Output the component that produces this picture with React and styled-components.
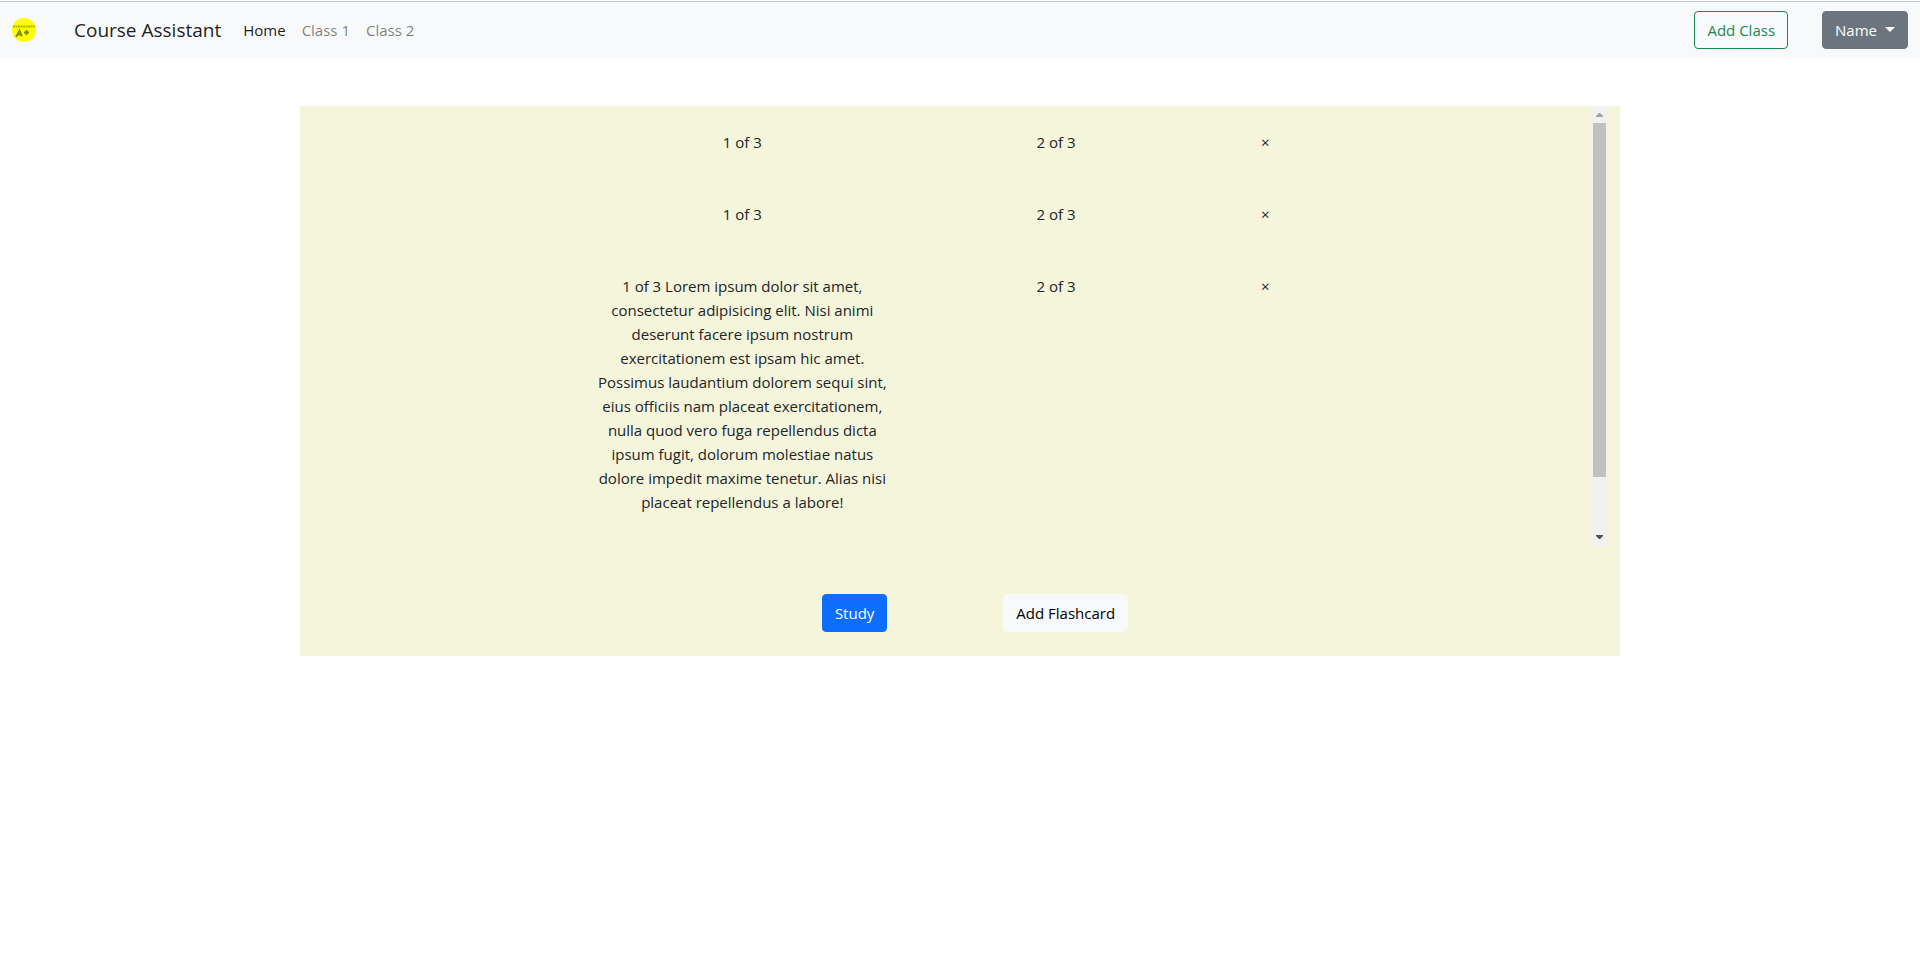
import React from "react";
import styled, { createGlobalStyle } from "styled-components";

const GlobalStyle = createGlobalStyle`
  *, *::before, *::after { box-sizing: border-box; }
  body {
    margin: 0;
    background: #fff;
    color: #212529;
    font-family: "Segoe UI", "Open Sans", "Noto Sans", sans-serif;
    font-size: 15px;
    line-height: 24px;
  }
`;

const TopEdge = styled.div`
  height: 2px;
  background: #fff;
  border-bottom: 1px solid #c8cccc;
`;

const Navbar = styled.nav`
  display: flex;
  align-items: center;
  justify-content: space-between;
  min-height: 56px;
  padding: 8px 12px;
  background: #f8f9fa;
`;

const NavGroup = styled.div`
  display: flex;
  align-items: center;
  gap: ${(p) => p.$gap}px;
`;

const Brand = styled.a`
  margin-right: 6px;
  color: rgba(0, 0, 0, 0.9);
  font-size: 19px;
  line-height: 30px;
  text-decoration: none;
`;

const NavLink = styled.a`
  color: ${(p) => (p.$active ? "rgba(0, 0, 0, 0.9)" : "rgba(0, 0, 0, 0.5)")};
  text-decoration: none;
`;

const variants = {
  primary: ["#0d6efd", "#0d6efd", "#fff"],
  secondary: ["#6c757d", "#6c757d", "#fff"],
  light: ["#f8f9fa", "#f8f9fa", "#000"],
  outline: ["transparent", "#198754", "#198754"],
};

const Button = styled.button`
  display: inline-flex;
  align-items: center;
  gap: 8px;
  padding: 6px 12px;
  border: 1px solid ${(p) => variants[p.$variant][1]};
  border-radius: 4px;
  background: ${(p) => variants[p.$variant][0]};
  color: ${(p) => variants[p.$variant][2]};
  font: inherit;
  cursor: pointer;
`;

const Caret = styled.span`
  margin-bottom: 2px;
  border: 5px solid transparent;
  border-top-color: currentColor;
  border-bottom: 0;
`;

const Panel = styled.main`
  width: 100%;
  max-width: 1320px;
  margin: 48px auto 0;
  padding: 0 12px;
  background: #f5f5dc;
`;

const ScrollArea = styled.div`
  display: flex;
  height: 440px;
`;

const CardList = styled.ul`
  flex: 1;
  min-width: 0;
  margin: 0;
  padding: 0 12px 72px;
  overflow-y: auto;
  list-style: none;
  scrollbar-width: none;
`;

const Scrollbar = styled.div`
  display: flex;
  flex-direction: column;
  width: 17px;
  background: #f1f1f1;
`;

const ScrollTrack = styled.div`
  flex: 1;
  padding: 0 2px;
`;

const ScrollThumb = styled.div`
  background: #c1c1c1;
`;

const ScrollArrow = styled.svg`
  display: block;
  width: 17px;
  height: 17px;
  fill: ${(p) => (p.$dim ? "#a3a3a3" : "#505050")};
`;

const CardRow = styled.li`
  display: grid;
  grid-template-columns: 5fr 6fr 6fr 2fr 5fr;
  padding: 24px 0;
  text-align: center;
`;

const Cell = styled.div`
  min-width: 0;
  padding: 0 12px;
  &:first-child { grid-column-start: 2; }
`;

const RemoveButton = styled.button`
  padding: 0 8px;
  border: 0;
  background: none;
  color: inherit;
  font: inherit;
  cursor: pointer;
`;

const Actions = styled.div`
  display: flex;
  justify-content: center;
  gap: 116px;
  padding: 48px 0 24px 30px;
`;

function Logo() {
  return (
    <svg width="24" height="24" viewBox="0 0 24 24" role="img" aria-label="A+ logo">
      <circle cx="12" cy="12" r="12" fill="#ffff00" />
      <path d="M1 8.500H23" stroke="#9a9a10" strokeWidth="1.800" strokeDasharray="2 .5" opacity=".75" />
      <path d="M4 19L7.500 12.500L10 18.500M5.500 16.500H9.500M12 14.500H17M14.500 12V17" fill="none" stroke="#7f8c00" strokeWidth="1.800" />
    </svg>
  );
}

const cards = [
  { term: "1 of 3", definition: "2 of 3" },
  { term: "1 of 3", definition: "2 of 3" },
  {
    term: "1 of 3 Lorem ipsum dolor sit amet, consectetur adipisicing elit. Nisi animi deserunt facere ipsum nostrum exercitationem est ipsam hic amet. Possimus laudantium dolorem sequi sint, eius officiis nam placeat exercitationem, nulla quod vero fuga repellendus dicta ipsum fugit, dolorum molestiae natus dolore impedit maxime tenetur. Alias nisi placeat repellendus a labore!",
    definition: "2 of 3",
  },
];

function ScrollingCards() {
  const listRef = React.useRef(null);
  const [scroll, setScroll] = React.useState({ size: 1, top: 0 });

  const measure = () => {
    const el = listRef.current;
    setScroll({
      size: el.clientHeight / el.scrollHeight,
      top: el.scrollTop / el.scrollHeight,
    });
  };

  React.useLayoutEffect(() => {
    measure();
    window.addEventListener("resize", measure);
    return () => window.removeEventListener("resize", measure);
  }, []);

  return (
    <ScrollArea>
      <CardList ref={listRef} onScroll={measure} tabIndex={0} aria-label="Flashcards">
        {cards.map((card, i) => (
          <CardRow key={i}>
            <Cell>{card.term}</Cell>
            <Cell>{card.definition}</Cell>
            <Cell>
              <RemoveButton type="button" aria-label="Remove flashcard">×</RemoveButton>
            </Cell>
          </CardRow>
        ))}
      </CardList>
      <Scrollbar aria-hidden="true">
        <ScrollArrow viewBox="0 0 17 17" $dim={scroll.top === 0}>
          <path d="M5 11h7v-1L9 7H8L5 10z" />
        </ScrollArrow>
        <ScrollTrack>
          <ScrollThumb
            style={{
              height: `${scroll.size * 100}%`,
              transform: `translateY(${(scroll.top / scroll.size) * 100}%)`,
            }}
          />
        </ScrollTrack>
        <ScrollArrow viewBox="0 0 17 17">
          <path d="M5 6h7v1L9 10H8L5 7z" />
        </ScrollArrow>
      </Scrollbar>
    </ScrollArea>
  );
}

export default function App() {
  return (
    <>
      <GlobalStyle />
      <TopEdge />
      <Navbar>
        <NavGroup $gap={38}>
          <Logo />
          <NavGroup $gap={16}>
            <Brand href="#">Course Assistant</Brand>
            <NavLink href="#" $active>Home</NavLink>
            <NavLink href="#">Class 1</NavLink>
            <NavLink href="#">Class 2</NavLink>
          </NavGroup>
        </NavGroup>
        <NavGroup $gap={34}>
          <Button type="button" $variant="outline">Add Class</Button>
          <Button type="button" $variant="secondary" aria-haspopup="menu">
            Name
            <Caret />
          </Button>
        </NavGroup>
      </Navbar>
      <Panel>
        <ScrollingCards />
        <Actions>
          <Button type="button" $variant="primary">Study</Button>
          <Button type="button" $variant="light">Add Flashcard</Button>
        </Actions>
      </Panel>
    </>
  );
}
